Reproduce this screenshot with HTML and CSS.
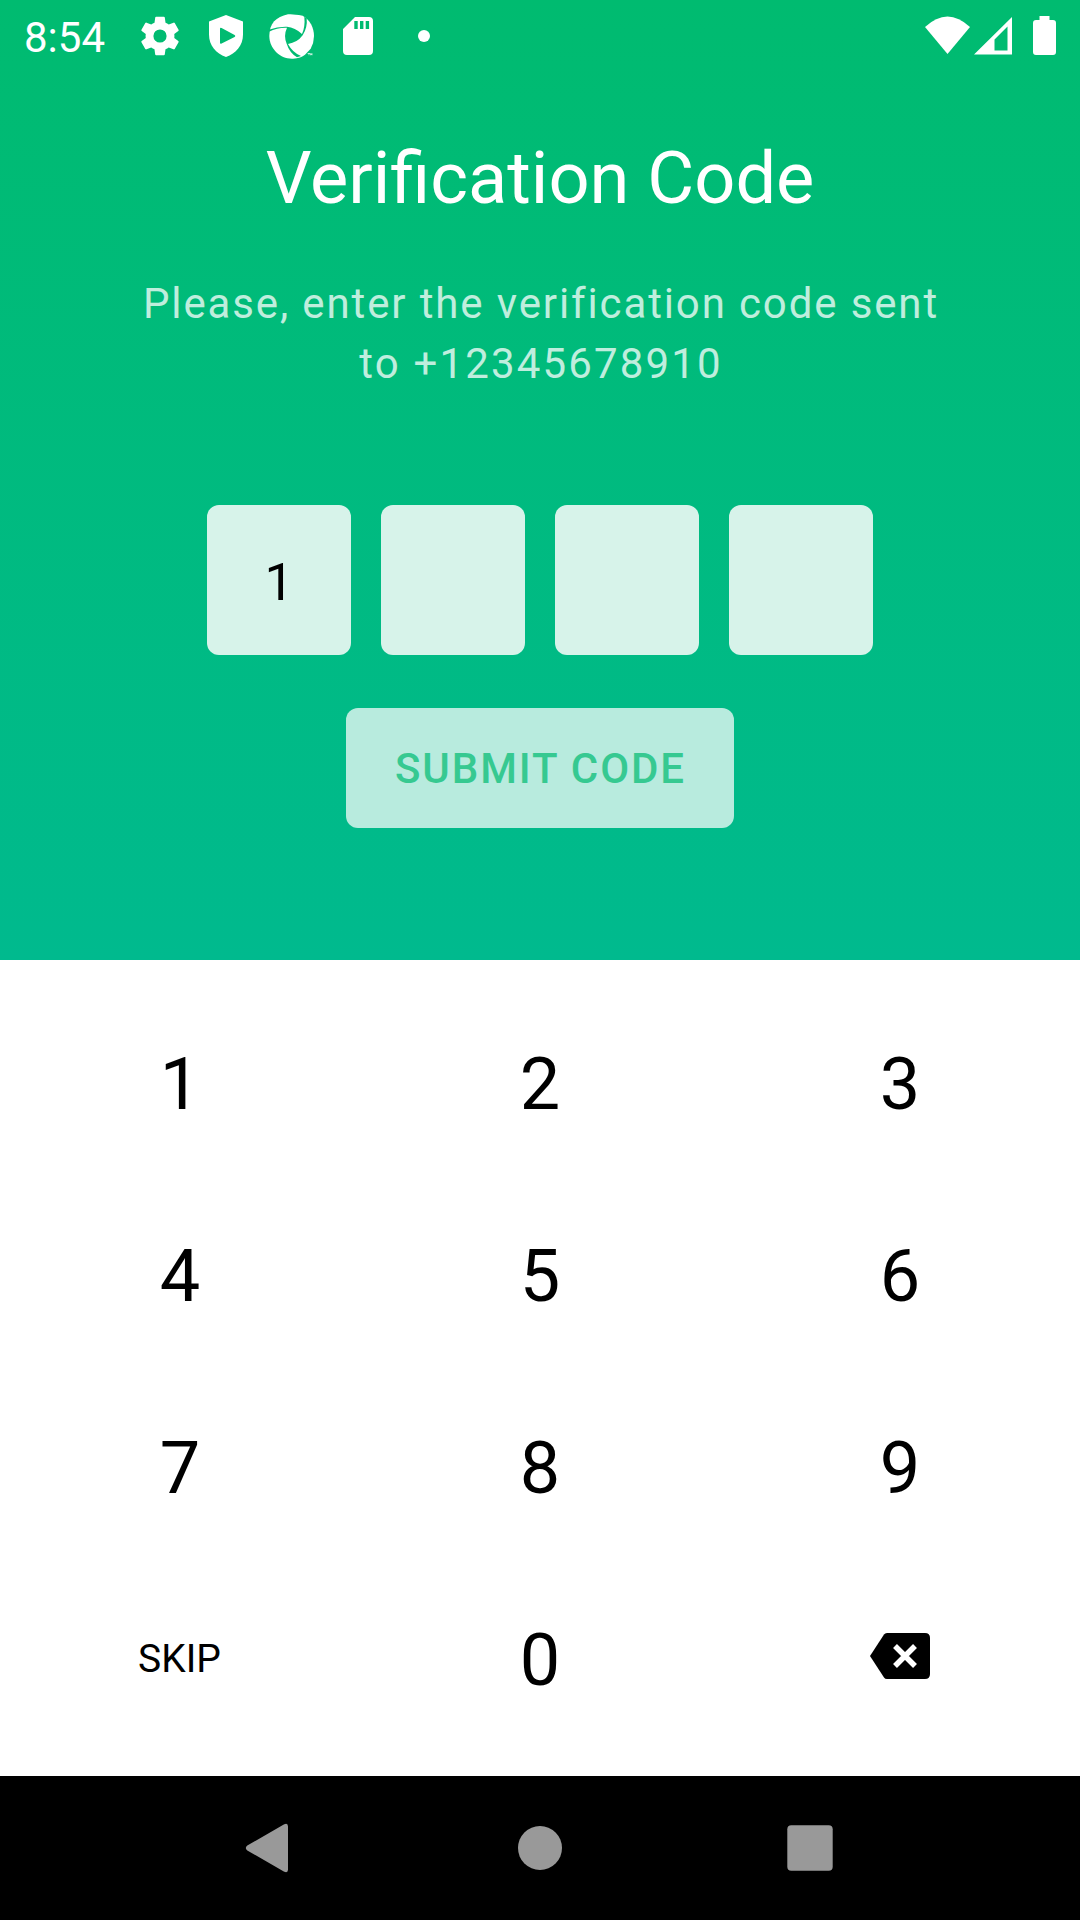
FILE: index.html
```html
<!DOCTYPE html>
<html lang="en">
<head>
<meta charset="utf-8">
<title>Verification Code</title>
<link rel="stylesheet" href="styles.css">
</head>
<body>
<main class="screen">
  <section class="verify">
    <header class="status">
      <span class="clock">8:54</span>
      <svg class="left-icons" width="320" height="72" viewBox="0 0 320 72" fill="#fff">
        <g transform="translate(12 12) scale(2)"><path d="M19.14 12.94c.04-.3.06-.61.06-.94 0-.32-.02-.64-.07-.94l2.03-1.58a.49.49 0 0 0 .12-.61l-1.92-3.32a.488.488 0 0 0-.59-.22l-2.39.96c-.5-.38-1.03-.7-1.62-.94l-.36-2.54a.484.484 0 0 0-.48-.41h-3.84c-.24 0-.43.17-.47.41l-.36 2.54c-.59.24-1.13.57-1.62.94l-2.39-.96c-.22-.08-.47 0-.59.22L2.74 8.87c-.12.21-.08.47.12.61l2.03 1.58c-.05.3-.09.63-.09.94s.02.64.07.94l-2.03 1.58a.49.49 0 0 0-.12.61l1.92 3.32c.12.22.37.29.59.22l2.39-.96c.5.38 1.03.7 1.62.94l.36 2.54c.05.24.24.41.48.41h3.84c.24 0 .44-.17.47-.41l.36-2.54c.59-.24 1.13-.56 1.62-.94l2.39.96c.22.08.47 0 .59-.22l1.92-3.32c.12-.22.07-.47-.12-.61l-2.01-1.58zM12 15.3A3.300 3.300 0 1 1 12 8.700a3.300 3.300 0 0 1 0 6.600z"/></g>
        <path fill-rule="evenodd" d="M102 15l17 6.500v13c0 11-7 19-17 22.500-10-3.500-17-11.500-17-22.500v-13zM96 29v13.500q0 1.800 1.600.9l13-6.500q1.500-.9 0-1.800l-13-7q-1.600-.9-1.600.9z"/>
        <g transform="translate(-124 0) scale(.33333)">
          <path d="M864 43q12-2 44 4c22 12 34 36 34 61q0 20-10 38l-17 18q-12 10-36 12c-38 2-71-30-71-68s20-57 56-65z"/>
          <path fill="#00bb72" d="M806 89q28-10 55-9 24 2 45 22 10-22 7-52l7 5q3 28-12 51-16 22-44 26 14 26 39 36l-12 4q-23-15-31-41-10-24 1-48-29-1-54 12z"/>
          <path d="M923 160h7v2h-2v4h-2v-4h-3zm8 0h2l1 2 1-2h2v6h-2v-3l-1 2-1-2v3h-2z"/>
        </g>
        <path fill-rule="evenodd" d="M231 17h14q4 0 4 4v30q0 4-4 4h-22q-4 0-4-4V29zM230.300 21v8h3.400v-8zm5.700 0v8h3.400v-8zm5.700 0v8h3.400v-8z"/>
        <circle cx="300" cy="36" r="6"/>
      </svg>
      <svg class="right-icons" width="180" height="72" viewBox="900 0 180 72" fill="#fff">
        <path d="M925 27q22.500-21 45 0l-22.500 27z"/>
        <path fill-rule="evenodd" d="M1012 17v37.500h-38zM1007.500 26.500v24h-13v-11z"/>
        <path d="M1039.500 16h10v4h3.500q3 0 3 3v29q0 3-3 3h-17q-3 0-3-3V23q0-3 3-3h3.500z"/>
      </svg>
    </header>
    <h1>Verification Code</h1>
    <p class="message"><span>Please, enter the verification code sent</span><span class="phone">to +12345678910</span></p>
    <div class="code"><span>1</span><span></span><span></span><span></span></div>
    <button class="submit">SUBMIT CODE</button>
  </section>
  <section class="keypad">
    <button>1</button><button>2</button><button>3</button>
    <button>4</button><button>5</button><button>6</button>
    <button>7</button><button>8</button><button>9</button>
    <button class="skip">SKIP</button><button>0</button>
    <button class="erase" aria-label="Delete"><svg width="60" height="46" viewBox="0 0 60 46"><path d="M17 0h38q5 0 5 5v36q0 5-5 5H17q-2 0-3-1.500L0 23 14 1.500Q15 0 17 0z"/><path d="M25 13l20 20M45 13L25 33" stroke="#fff" stroke-width="5.500"/></svg></button>
  </section>
  <nav class="navigation">
    <svg width="1080" height="144" viewBox="0 0 1080 144" fill="#999"><path d="M247.300 69.500l36.500-21q4.200-2 4.200 2v43q0 4-4.200 2l-36.500-21q-3-2.500 0-5z"/><circle cx="540" cy="72" r="22"/><rect x="787.300" y="49.300" width="45.400" height="45.400" rx="4"/></svg>
  </nav>
</main>
</body>
</html>
```
FILE: styles.css
```css
* { box-sizing: border-box; }
body { margin: 0; font-family: Roboto, sans-serif; }
button { border: 0; padding: 0; font: inherit; background: none; }
.screen { width: 1080px; height: 1920px; display: flex; flex-direction: column; background: #fff; }
.verify { height: 960px; display: flex; flex-direction: column; align-items: center; background: linear-gradient(#00bb70, #00ba8e); color: #fff; }
.status { width: 100%; height: 72px; display: flex; align-items: center; padding-left: 24px; }
.clock { width: 100px; font-size: 42px; line-height: 72px; padding-top: 3px; }
.left-icons { flex: none; }
.right-icons { margin-left: auto; }
h1 { margin: 59px 0 0; font-size: 72.15px; line-height: 96px; font-weight: 400; white-space: nowrap; }
.message { margin: 47px 0 0; padding-left: 2px; color: rgba(255,255,255,.75); font-size: 42px; line-height: 60px; letter-spacing: 1.87px; text-align: center; white-space: nowrap; }
.message span { display: block; }
.message .phone { letter-spacing: 2.15px; }
.code { display: flex; gap: 30px; margin-top: 111px; }
.code span { width: 144px; height: 150px; display: flex; align-items: center; justify-content: center; border-radius: 12px; background: #d7f3ea; color: #000; font-size: 52px; padding-top: 4px; }
.submit { width: 388px; height: 120px; margin-top: 53px; padding-left: 1px; border-radius: 12px; background: #b8ebde; color: #36c991; font-size: 42px; font-weight: 500; letter-spacing: 1.9px; }
.keypad { height: 816px; padding: 28px 0; display: grid; grid-template-columns: repeat(3, 1fr); grid-template-rows: repeat(4, 192px); }
.keypad button { display: flex; align-items: center; justify-content: center; color: #000; font-size: 72px; padding-top: 1px; }
.keypad .skip { font-size: 39px; padding: 0 1px 2px 0; }
.keypad .erase { padding: 0 0 8px; }
.navigation { height: 144px; background: #000; }
.navigation svg { display: block; }
```
